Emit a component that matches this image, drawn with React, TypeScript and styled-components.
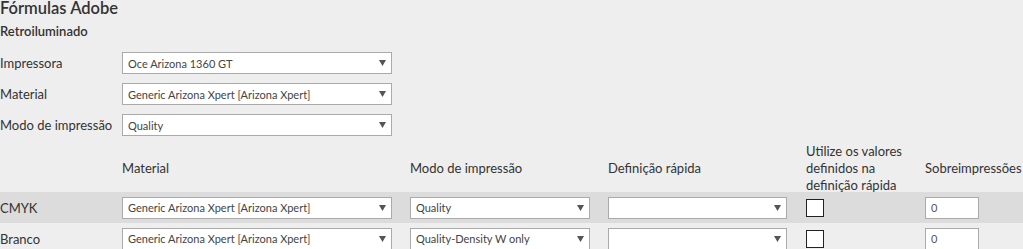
import React from 'react'
import { createGlobalStyle, styled } from 'styled-components'

const Global = createGlobalStyle`
  html, body {
    margin: 0;
    padding: 0;
    background: #eeeeee;
    overflow: hidden;
  }
  body {
    font-family: Lato, "Open Sans", sans-serif;
    color: #333333;
  }
`

type Option = { label: string; value: string }

const topFields: Option[] = [
  { label: 'Impressora', value: 'Oce Arizona 1360 GT' },
  { label: 'Material', value: 'Generic Arizona Xpert [Arizona Xpert]' },
  { label: 'Modo de impressão', value: 'Quality' },
]

const rows = [
  { name: 'CMYK', material: 'Generic Arizona Xpert [Arizona Xpert]', mode: 'Quality', overprints: '0' },
  { name: 'Branco', material: 'Generic Arizona Xpert [Arizona Xpert]', mode: 'Quality-Density W only', overprints: '0' },
]

const headers = ['', 'Material', 'Modo de impressão', 'Definição rápida', 'Utilize os valores definidos na definição rápida', 'Sobreimpressões']

const Arrow = () => (
  <svg width="7" height="6" viewBox="0 0 7 6">
    <polygon points="0,0 7,0 3.5,6" fill="#555" />
  </svg>
)

const Dropdown = ({ value, width }: { value?: string; width: number }) => (
  <SelectBox $width={width}>
    <span>{value}</span>
    <Arrow />
  </SelectBox>
)

const App = () => {
  return (
    <Page>
      <Global />
      <Title>Fórmulas Adobe</Title>
      <Subtitle>Retroiluminado</Subtitle>

      <FormGrid>
        {topFields.map((f) => (
          <React.Fragment key={f.label}>
            <FieldLabel>{f.label}</FieldLabel>
            <Dropdown value={f.value} width={270} />
          </React.Fragment>
        ))}
      </FormGrid>

      <Table>
        <colgroup>
          <col style={{ width: 122 }} />
          <col style={{ width: 288 }} />
          <col style={{ width: 198 }} />
          <col style={{ width: 198 }} />
          <col style={{ width: 119 }} />
          <col style={{ width: 105 }} />
        </colgroup>
        <thead>
          <tr>
            {headers.map((h, i) => (
              <Th key={i}>
                <ThInner $nowrap={i === headers.length - 1}>{h}</ThInner>
              </Th>
            ))}
          </tr>
        </thead>
        <tbody>
          {rows.map((r, i) => (
            <Row key={r.name} $shaded={i % 2 === 0}>
              <Td>{r.name}</Td>
              <Td><Dropdown value={r.material} width={270} /></Td>
              <Td><Dropdown value={r.mode} width={180} /></Td>
              <Td><Dropdown width={179} /></Td>
              <Td><Check /></Td>
              <Td><NumberInput readOnly value={r.overprints} /></Td>
            </Row>
          ))}
        </tbody>
      </Table>
    </Page>
  )
}

export default App

const Page = styled.div`
  width: 1040px;
`

const Title = styled.h1`
  margin: 0;
  font-size: 16.5px;
  line-height: 16px;
  font-weight: 600;
  color: #333;
`

const Subtitle = styled.h2`
  margin: 7px 0 0;
  font-size: 13px;
  line-height: 17px;
  font-weight: 600;
  color: #333;
`

const FormGrid = styled.div`
  display: grid;
  grid-template-columns: 122px 270px;
  grid-auto-rows: 22px;
  row-gap: 9px;
  align-items: center;
  margin-top: 12px;
`

const FieldLabel = styled.label`
  font-size: 13px;
  color: #333;
`

const SelectBox = styled.div<{ $width: number }>`
  box-sizing: border-box;
  width: ${(p) => p.$width}px;
  height: 22px;
  display: flex;
  align-items: center;
  justify-content: space-between;
  padding: 0 5px 0 5px;
  background: #fff;
  border: 1px solid #aaaaaa;
  font-size: 11px;
  color: #444;
  white-space: nowrap;
  overflow: hidden;
`

const Table = styled.table`
  margin-top: 5px;
  border-collapse: collapse;
  table-layout: fixed;
  width: 1030px;
`

const Th = styled.th`
  padding: 0;
  text-align: left;
  vertical-align: top;
  font-size: 13px;
  line-height: 17px;
  font-weight: 400;
  color: #333;
`

const ThInner = styled.div<{ $nowrap?: boolean }>`
  box-sizing: border-box;
  height: 51px;
  padding-top: 4px;
  display: flex;
  align-items: center;
  white-space: ${(p) => (p.$nowrap ? 'nowrap' : 'normal')};
`

const Row = styled.tr<{ $shaded: boolean }>`
  background: ${(p) => (p.$shaded ? '#dcdcdc' : 'transparent')};
`

const Td = styled.td`
  padding: 0;
  height: 31px;
  vertical-align: middle;
  font-size: 13px;
  color: #333;
`

const Check = styled.div`
  box-sizing: border-box;
  width: 18px;
  height: 18px;
  background: #fff;
  border: 1px solid #222;
`

const NumberInput = styled.input`
  box-sizing: border-box;
  width: 54px;
  height: 22px;
  padding: 0 0 0 5px;
  margin: 0;
  background: #fff;
  border: 1px solid #aaaaaa;
  border-radius: 0;
  font-family: inherit;
  font-size: 11px;
  color: #555;
  outline: none;
`
